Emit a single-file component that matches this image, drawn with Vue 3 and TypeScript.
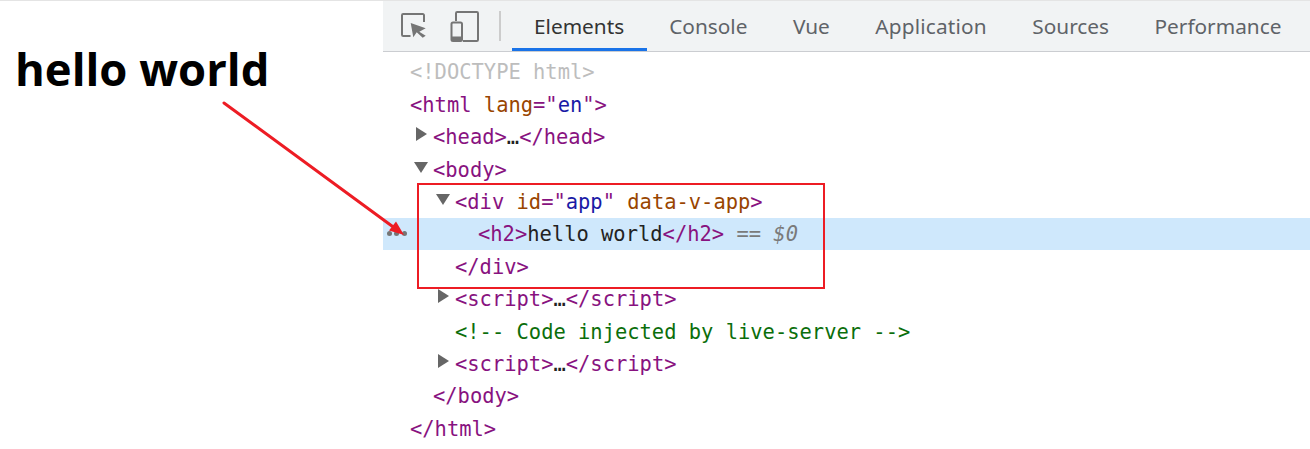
<script setup lang="ts">
interface Seg { t: string; c: string }
interface Row { indent: number; arrow?: 'right' | 'down'; selected?: boolean; dots?: boolean; segs: Seg[] }

const tabs: string[] = ['Elements', 'Console', 'Vue', 'Application', 'Sources', 'Performance']

const tag = (t: string): Seg => ({ t, c: 'tag' })
const rows: Row[] = [
  { indent: 0, segs: [{ t: '<!DOCTYPE html>', c: 'doctype' }] },
  { indent: 0, segs: [tag('<html'), { t: ' lang', c: 'attr' }, { t: '="', c: 'tag' }, { t: 'en', c: 'val' }, tag('">')] },
  { indent: 1, arrow: 'right', segs: [tag('<head>'), { t: '…', c: 'text' }, tag('</head>')] },
  { indent: 1, arrow: 'down', segs: [tag('<body>')] },
  { indent: 2, arrow: 'down', segs: [tag('<div'), { t: ' id', c: 'attr' }, tag('="'), { t: 'app', c: 'val' }, tag('"'), { t: ' data-v-app', c: 'attr' }, tag('>')] },
  { indent: 3, selected: true, dots: true, segs: [tag('<h2>'), { t: 'hello world', c: 'text' }, tag('</h2>'), { t: ' == ', c: 'eq' }, { t: '$0', c: 'eq italic' }] },
  { indent: 2, segs: [tag('</div>')] },
  { indent: 2, arrow: 'right', segs: [tag('<script>'), { t: '…', c: 'text' }, tag('</' + 'script>')] },
  { indent: 2, segs: [{ t: '<!-- Code injected by live-server -->', c: 'comment' }] },
  { indent: 2, arrow: 'right', segs: [tag('<script>'), { t: '…', c: 'text' }, tag('</' + 'script>')] },
  { indent: 1, segs: [tag('</body>')] },
  { indent: 0, segs: [tag('</html>')] },
]
</script>

<template>
  <div class="page">
    <section class="preview">
      <h2 class="title">hello world</h2>
    </section>

    <section class="devtools">
      <header class="toolbar">
        <div class="tools">
          <svg class="tool" width="26" height="26" viewBox="0 0 26 26" fill="none">
            <path d="M9.500 23H2.200A1.200 1.200 0 0 1 1 21.800V2.200A1.200 1.200 0 0 1 2.200 1h19.600A1.200 1.200 0 0 1 23 2.200V9" stroke="#757575" stroke-width="2" />
            <path d="M9.700 10L24.700 15.300 18.300 18.700 24.700 22.700 21.700 24.800 15.700 19.300 12.300 24.300z" fill="#757575" />
          </svg>
          <svg class="tool" width="29" height="31" viewBox="0 0 29 31" fill="none">
            <path d="M6 10V2.200A1.200 1.200 0 0 1 7.200 1h19.600A1.200 1.200 0 0 1 28 2.200v26.600a1.200 1.200 0 0 1-1.200 1.200H13" stroke="#757575" stroke-width="2" />
            <rect x="1.500" y="11.500" width="10.500" height="18.500" rx="1.500" stroke="#757575" stroke-width="2" />
            <rect x="1.500" y="25.500" width="10.500" height="4.500" fill="#757575" />
          </svg>
        </div>
        <span class="divider"></span>
        <nav class="tabs">
          <span v-for="(tab, i) in tabs" :key="tab" class="tab" :class="{ active: i === 0 }">{{ tab }}</span>
        </nav>
      </header>

      <div class="tree">
        <div v-for="(row, i) in rows" :key="i" class="row" :class="{ selected: row.selected }">
          <span v-if="row.dots" class="dots"><i></i><i></i><i></i></span>
          <span class="code" :class="'lvl' + row.indent">
            <span v-if="row.arrow" class="arrow" :class="row.arrow"></span>
            <span v-for="(s, j) in row.segs" :key="j" :class="s.c">{{ s.t }}</span>
          </span>
        </div>
      </div>
    </section>

    <svg class="marks" width="1310" height="449" viewBox="0 0 1310 449" fill="none">
      <rect x="418" y="184" width="406" height="104" stroke="#ed1c24" stroke-width="2" />
      <path d="M224 103L396 229" stroke="#ed1c24" stroke-width="3" stroke-linecap="round" />
      <path d="M404 235L389 230.500L396 221.500z" fill="#ed1c24" />
    </svg>
  </div>
</template>

<style>
html, body { margin: 0; background: #fff; }
</style>

<style scoped>
.page {
  position: relative;
  display: flex;
  width: 1310px;
  height: 449px;
  overflow: hidden;
  background: #fff;
  border-top: 1px solid #e4e4e4;
  box-sizing: border-box;
}
.preview { width: 383px; flex: none; padding: 36px 0 0 15px; box-sizing: border-box; }
.title {
  margin: 0;
  font: 700 45.4px/62px "Open Sans", "Noto Sans", sans-serif;
  color: #000;
  white-space: nowrap;
}
.devtools { flex: 1; min-width: 0; }
.toolbar {
  display: flex;
  align-items: center;
  height: 51px;
  background: #f1f3f4;
  border-bottom: 1px solid #cbcdd1;
  box-sizing: border-box;
}
.tools { display: flex; align-items: center; gap: 23px; padding-left: 18px; }
.tool { display: block; }
.divider { width: 2px; height: 30px; margin: 0 11px 0 20px; background: #ccc; }
.tabs { display: flex; align-self: stretch; }
.tab {
  display: flex;
  align-items: center;
  padding: 0 23.5px 0 22px;
  font: 400 20.8px "Noto Sans", "Open Sans", sans-serif;
  color: #5f6368;
  white-space: nowrap;
}
.tab:nth-child(4) { letter-spacing: 0.18px; }
.tab.active { padding-right: 23px; color: #333; box-shadow: inset 0 -3px 0 #1a73e8; }
.tree { padding-top: 4.45px; font: 400 20.450px/32.4px "DejaVu Sans Mono", monospace; }
.row { position: relative; height: 32.4px; white-space: pre; }
.row.selected { height: 32px; margin-bottom: 0.4px; background: #cfe8fc; }
.code { position: relative; display: inline-block; }
.lvl0 { margin-left: 27px; }
.lvl1 { margin-left: 50px; }
.lvl2 { margin-left: 72px; }
.lvl3 { margin-left: 95px; }
.arrow { position: absolute; width: 0; height: 0; }
.arrow.right { left: -17px; top: 6px; border-left: 11px solid #666; border-top: 7px solid transparent; border-bottom: 7px solid transparent; }
.arrow.down { left: -19px; top: 8px; border-top: 11px solid #666; border-left: 7px solid transparent; border-right: 7px solid transparent; }
.dots { position: absolute; left: 3.500px; top: 13px; display: flex; gap: 2.500px; }
.dots i { width: 5px; height: 5px; border-radius: 50%; background: #757575; }
.doctype { color: #bdbdbd; }
.tag { color: #881280; }
.attr { color: #994500; }
.val { color: #1a1aa6; }
.text { color: #222; }
.comment { color: #0b6e0b; }
.eq { color: #7a7a7a; }
.italic { font-style: italic; }
.marks { position: absolute; left: 0; top: -1px; pointer-events: none; }
</style>
